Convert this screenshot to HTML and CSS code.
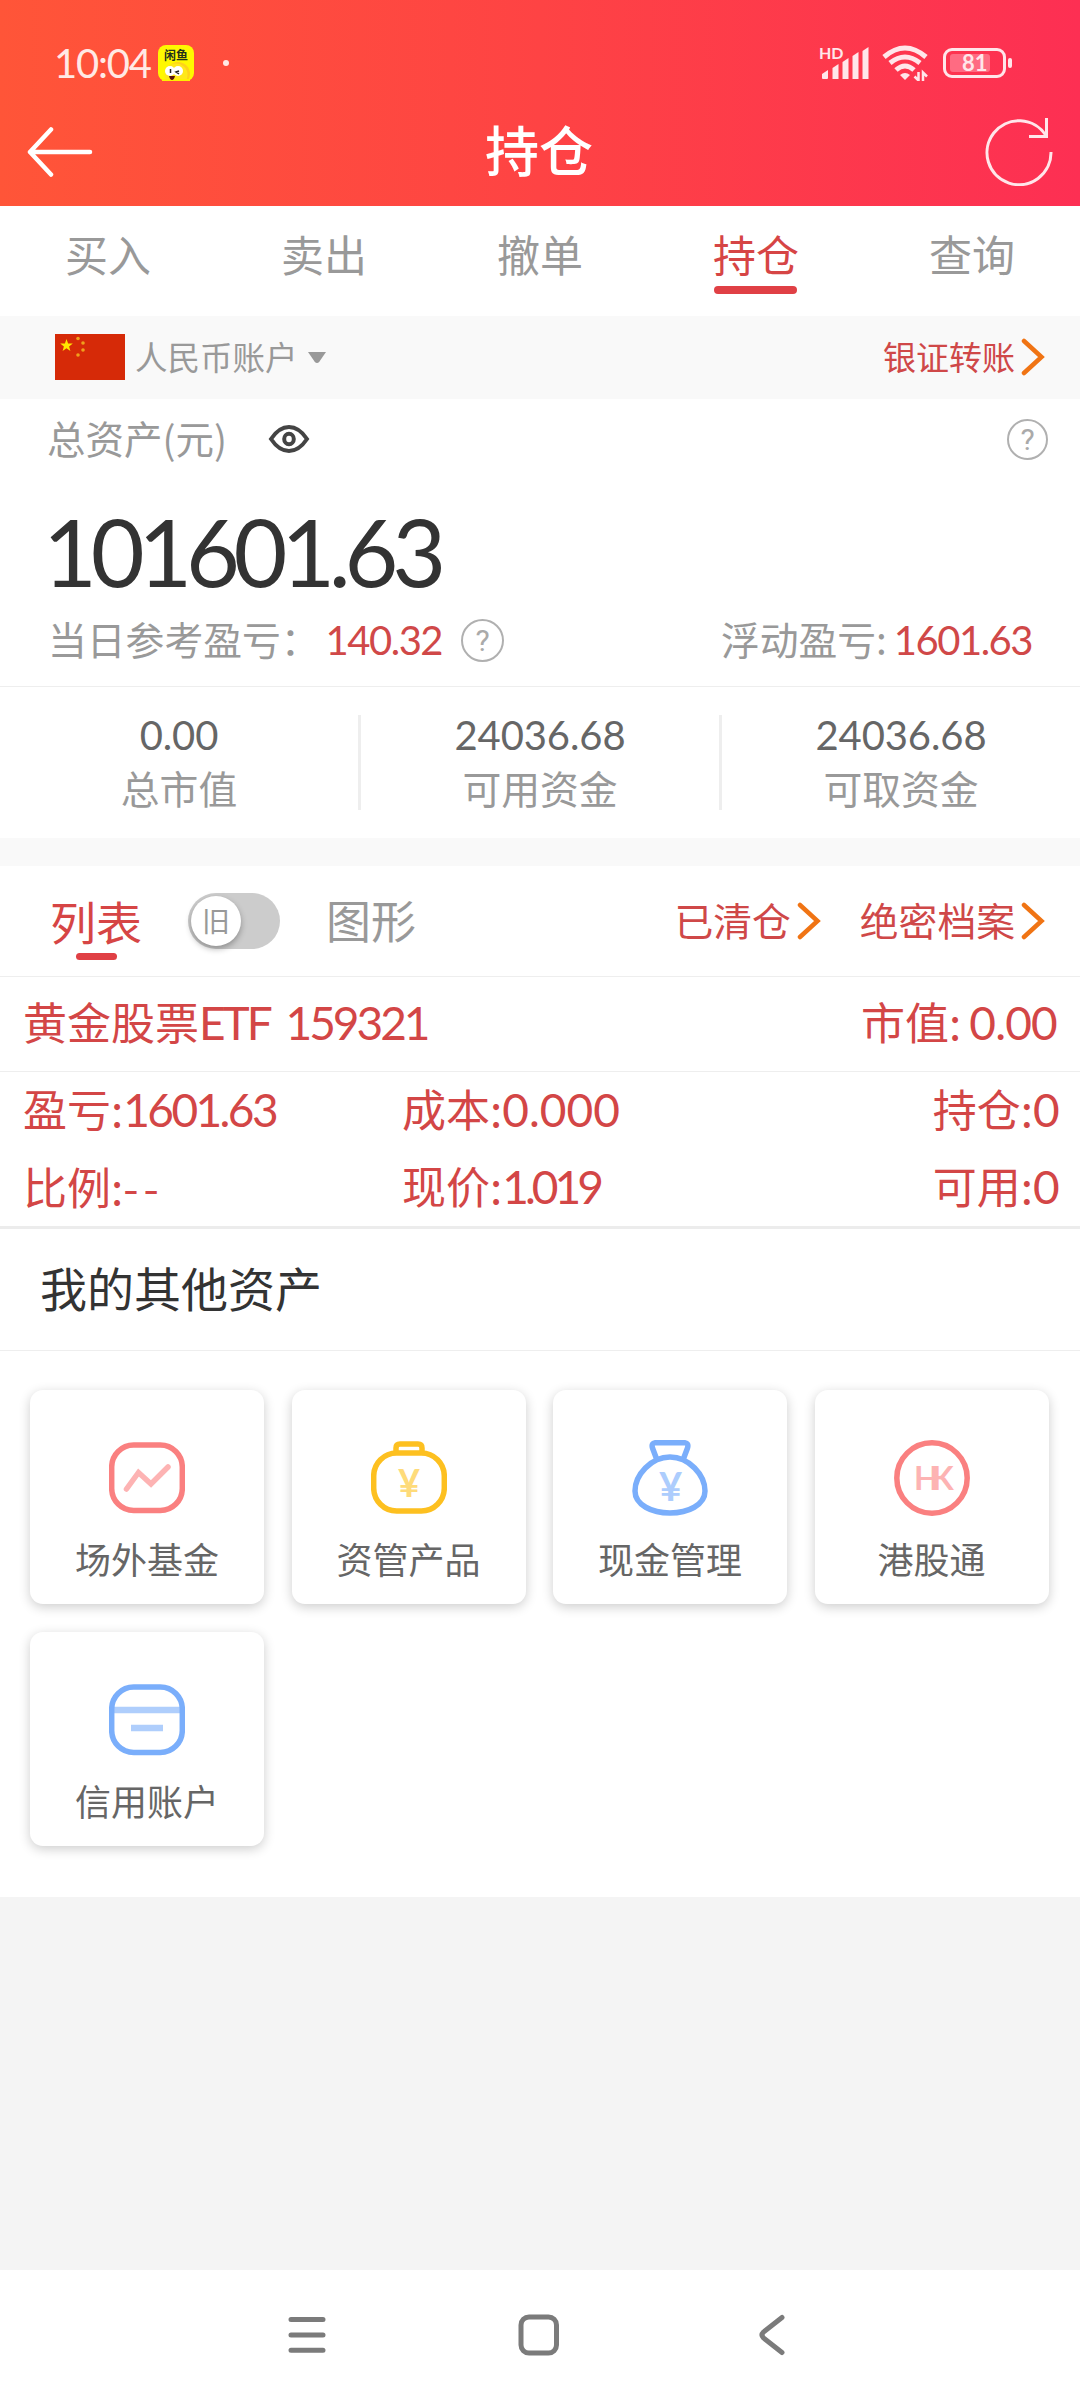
FILE: index.html
```html
<!DOCTYPE html>
<html lang="zh-CN">
<head>
    <meta charset="UTF-8">
    <meta name="viewport" content="width=device-width, initial-scale=1.0">
    <title>持仓</title>
    <link rel="stylesheet" href="styles.css">
</head>
<body>

    <!-- Header -->
    <header class="header">
        <div class="status">
            <span class="time">10:04</span>
            <svg class="app-icon" width="36" height="36" viewBox="0 0 36 36">
                <rect width="36" height="36" rx="8" fill="#fff800"/>
                <circle cx="20" cy="29" r="12" fill="#ffd21a"/>
                <circle cx="18" cy="30" r="11.500" fill="#ffe81a"/>
                <rect x="4" y="34" width="28" height="2" fill="#fff000"/>
                <text x="6" y="15" font-size="12" font-weight="bold" fill="#23301c">闲鱼</text>
                <circle cx="12" cy="26" r="5" fill="#fff"/>
                <circle cx="20" cy="26" r="5" fill="#fff"/>
                <path d="M12.500 24v4M21 26l-3 1 3 2" stroke="#222" stroke-width="1.500" fill="none"/>
                <path d="M11 31h6q-1 4-3 4t-3-4z" fill="#5a1408"/>
            </svg>
            <span class="dot"></span>
            <svg class="signal" width="50" height="40" viewBox="0 -2 50 40">
                <text x="0" y="14" font-size="16" font-weight="bold" fill="#ffe6ea">HD</text>
                <path d="M3 29l6-4v8a1 1 0 0 1-1 1H4a1 1 0 0 1-1-1zM13.500 23l6-4v15h-6zM23.500 17l6-4v21h-6zM33.500 11l6-4v27h-6zM43.500 6l6-4v32h-6z" fill="#ffe6ea"/>
            </svg>
            <svg class="wifi" width="46" height="36" viewBox="0 0 46 36">
                <g fill="none" stroke="#ffe6ea" stroke-width="5">
                    <path d="M2 12q21-18 42 0"/>
                    <path d="M8 18q15-12 30 0"/>
                    <path d="M14 25q9-8 18 0"/>
                </g>
                <path d="M18 30q5-4 10 0l-5 5z" fill="#ffe6ea"/>
                <path d="M36.500 27v8.500l-4-4M41 36v-8.500l4 4" fill="none" stroke="#ffe6ea" stroke-width="2.500"/>
            </svg>
            <div class="battery"><span>81</span></div>
        </div>
        <div class="nav">
            <svg width="66" height="52" viewBox="0 0 66 52">
                <path d="M24 3.500L3 26l21 22.500M3 26h60" fill="none" stroke="#fff" stroke-width="4.500" stroke-linecap="round" stroke-linejoin="round"/>
            </svg>
            <h1>持仓</h1>
            <svg class="refresh" width="68" height="70" viewBox="0 0 68 70">
                <path d="M66 36A32 32 0 1 1 61 19.500M61.500 2v18.500H44" fill="none" stroke="#ffe6ea" stroke-width="3"/>
            </svg>
        </div>
    </header>

    <!-- Tabs -->
    <div class="tabs">
        <span>买入</span>
        <span>卖出</span>
        <span>撤单</span>
        <span class="active">持仓</span>
        <span>查询</span>
    </div>

    <!-- Account -->
    <div class="account">
        <svg class="flag" width="70" height="46" viewBox="0 0 70 46">
            <rect width="70" height="46" fill="#d62a08"/>
            <path d="M11.500 5l1.600 4.400 4.700.1-3.700 2.900 1.300 4.500-3.900-2.700-3.900 2.700 1.300-4.500-3.700-2.900 4.700-.1z" fill="#ffe600"/>
            <g fill="#f0a01c">
                <circle cx="23" cy="4.500" r="1.800"/>
                <circle cx="28" cy="9" r="1.800"/>
                <circle cx="28" cy="16" r="1.800"/>
                <circle cx="23" cy="21" r="1.800"/>
            </g>
        </svg>
        <span class="account-name">人民币账户</span>
        <svg class="caret" width="18" height="12" viewBox="0 0 18 12"><path d="M0 0h18l-6.500 9.500q-2.500 3-5 0z" fill="#999"/></svg>
        <span class="link transfer">银证转账</span>
        <svg class="arrow" width="24" height="38" viewBox="0 0 24 38"><path d="M3 3l17.500 16L3 35"/></svg>
    </div>

    <!-- Total assets -->
    <div class="summary">
        <div class="summary-top">
            <span>总资产(元)</span>
            <svg class="eye" width="42" height="30" viewBox="0 0 42 30">
                <path d="M3 15Q11 3 21 3t18 12Q31 27 21 27T3 15z"/>
                <ellipse cx="21" cy="15" rx="4.800" ry="5.300"/>
            </svg>
            <span class="help">?</span>
        </div>
        <div class="total">101601.63</div>
        <div class="profit">
            <span>当日参考盈亏：</span>
            <b class="num today">140.32</b>
            <span class="help big">?</span>
            <span class="float">浮动盈亏:</span>
            <b class="num">1601.63</b>
        </div>
    </div>

    <div class="funds">
        <div><b class="num">0.00</b><span>总市值</span></div>
        <div><b class="num">24036.68</b><span>可用资金</span></div>
        <div><b class="num">24036.68</b><span>可取资金</span></div>
    </div>

    <!-- Position list -->
    <div class="list-head">
        <span class="view active">列表</span>
        <div class="toggle"><span>旧</span></div>
        <span class="view">图形</span>
        <span class="link cleared">已清仓</span>
        <svg class="arrow" width="24" height="38" viewBox="0 0 24 38"><path d="M3 3l17.500 16L3 35"/></svg>
        <span class="link secret">绝密档案</span>
        <svg class="arrow" width="24" height="38" viewBox="0 0 24 38"><path d="M3 3l17.500 16L3 35"/></svg>
    </div>
    <div class="stock">
        <span>黄金股票<b class="code">ETF 159321</b></span>
        <span>市值:<b class="value">0.00</b></span>
    </div>
    <div class="detail">
        <span>盈亏:<b>1601.63</b></span>
        <span>成本:<b class="cost">0.000</b></span>
        <span>持仓:<b>0</b></span>
        <span>比例:<i>--</i></span>
        <span>现价:<b class="price">1.019</b></span>
        <span>可用:<b>0</b></span>
    </div>

    <!-- Other assets -->
    <h2>我的其他资产</h2>
    <div class="cards">
        <div class="card">
            <svg width="76" height="76" viewBox="0 0 76 76" fill="none">
                <rect x="2.700" y="5" width="70.600" height="65.500" rx="22" stroke="#fa8080" stroke-width="5.500"/>
                <path d="M17.500 49l12-16.500L42 44l17-17" stroke="#fdb3b3" stroke-width="5.500" stroke-linecap="round"/>
            </svg>
            <span>场外基金</span>
        </div>
        <div class="card">
            <svg width="76" height="76" viewBox="0 0 76 76" fill="none" stroke="#fdc020" stroke-width="5.500">
                <rect x="2.700" y="13" width="70.600" height="58" rx="23"/>
                <path d="M25 13V8q0-4 4-4h18q4 0 4 4v5"/>
                <text class="yen" x="38" y="57" font-size="38" fill="#fedb7a">¥</text>
            </svg>
            <span>资管产品</span>
        </div>
        <div class="card">
            <svg width="76" height="76" viewBox="0 0 76 76" fill="none" stroke="#7aaefb" stroke-width="5.500">
                <path d="M38 17C19 17 3 35 3 51c0 14 17 22 35 22s35-8 35-22c0-16-16-34-35-34z"/>
                <path d="M25 20L20.500 8q-1.500-5 3-5.300h29q4.500.3 3 5.300L51 20"/>
                <text class="yen" x="38.500" y="61" font-size="40" fill="#adcdfd">¥</text>
            </svg>
            <span>现金管理</span>
        </div>
        <div class="card">
            <svg width="76" height="76" viewBox="0 0 76 76" fill="none">
                <circle cx="38" cy="38" r="35.200" stroke="#fa8080" stroke-width="5.500"/>
                <text class="hk" x="20" y="49.500">HK</text>
            </svg>
            <span>港股通</span>
        </div>
        <div class="card">
            <svg width="76" height="76" viewBox="0 0 76 76" fill="none">
                <path d="M4 28h68M22 46h32" stroke="#afcefc" stroke-width="6.500"/>
                <rect x="2.700" y="5" width="70.600" height="65.500" rx="22" stroke="#7aaefb" stroke-width="5.500"/>
            </svg>
            <span>信用账户</span>
        </div>
    </div>

    <!-- System navigation -->
    <footer class="system">
        <svg width="40" height="44" viewBox="0 0 40 44"><path d="M4 6.500h32M4 22h32M4 37.300h32"/></svg>
        <svg width="44" height="44" viewBox="0 0 44 44"><rect x="4" y="4" width="35.500" height="36" rx="8"/></svg>
        <svg class="back" width="28" height="44" viewBox="0 0 28 44"><path d="M24 4.500L5.500 19q-3 3 0 6L24 39.500"/></svg>
    </footer>

</body>
</html>
```
FILE: styles.css
```css
* {
    box-sizing: border-box;
}
body {
    display: flex;
    flex-direction: column;
    margin: 0;
    width: 1080px;
    height: 2400px;
    background: #f4f4f4;
    color: #999;
    font-family: "Noto Sans CJK SC", sans-serif;
    font-size: 38.800px;
    line-height: 1;
}
svg {
    display: block;
    flex: none;
}
span {
    white-space: nowrap;
}
h1, h2 {
    margin: 0;
}
b, .total, .time {
    font-family: Lato, sans-serif;
    font-weight: normal;
}

/* Header */
.header {
    height: 206px;
    background: linear-gradient(90deg, #ff5538, #fe4344 50%, #fd2f53);
    color: #fff;
}
.status {
    display: flex;
    align-items: center;
    height: 98px;
    padding: 28px 74px 0 54px;
}
.time {
    width: 104px;
    font-size: 40px;
    letter-spacing: -1.200px;
    color: #ffe9e5;
}
.dot {
    width: 6px;
    height: 6px;
    margin-left: 29px;
    border-radius: 50%;
    background: #ffe9e5;
}
.signal {
    margin-left: auto;
    font-family: Lato, sans-serif;
}
.wifi {
    margin-left: 13px;
}
.battery {
    position: relative;
    width: 63px;
    height: 30px;
    margin-left: 15px;
    padding: 3px 0 0 4px;
    border: 3px solid #ffe6ea;
    border-radius: 9px;
}
.battery span {
    display: block;
    width: 40px;
    height: 18px;
    padding-left: 12px;
    border-radius: 3px;
    background: #ff6b82;
    color: #ffe6ea;
    font: bold 22px/18px Lato, sans-serif;
}
.battery::after {
    content: "";
    position: absolute;
    right: -9px;
    top: 7px;
    width: 4px;
    height: 10px;
    border-radius: 2px;
    background: #ffe6ea;
}
.nav {
    display: flex;
    align-items: center;
    justify-content: space-between;
    height: 108px;
    padding: 0 27px;
}
.nav h1 {
    padding-bottom: 7px;
    font-size: 54px;
    font-weight: 500;
}
.refresh {
    margin-bottom: 3px;
}

/* Tabs */
.tabs {
    display: grid;
    grid-template-columns: repeat(5, 1fr);
    justify-items: center;
    height: 110px;
    background: #fff;
    font-size: 43px;
}
.tabs span {
    height: 88px;
    padding-top: 26px;
}
.tabs .active {
    position: relative;
    color: #d64545;
}
.tabs .active::after {
    content: "";
    position: absolute;
    left: 1px;
    bottom: 0;
    width: 83px;
    height: 8px;
    border-radius: 4px;
    background: #e04045;
}

/* Account */
.account {
    display: flex;
    align-items: center;
    height: 83px;
    padding: 0 35px 0 55px;
    background: #f9f9f9;
    font-size: 32.500px;
}
.account span, .summary-top span:first-child, .profit > span, .list-head > span, .stock > span, .detail > span {
    padding-bottom: 3px;
}
.flag {
    margin-bottom: 2px;
}
.account-name {
    margin-left: 10px;
}
.caret {
    margin-left: 10px;
}
.link {
    color: #cf4848;
}
.transfer {
    margin-left: auto;
    font-size: 33px;
}
.arrow {
    margin-left: 6px;
    fill: none;
    stroke: #f07414;
    stroke-width: 4.500;
    stroke-linecap: round;
}
.account .arrow {
    margin-bottom: 2px;
}

/* Total assets */
.summary {
    height: 288px;
    border-bottom: 1px solid #eee;
    background: #fff;
}
.summary-top {
    display: flex;
    align-items: center;
    height: 80px;
    padding: 0 32px 0 47px;
    font-size: 38.500px;
}
.eye {
    margin-left: 41px;
    fill: none;
    stroke: #444;
    stroke-width: 4;
}
.help {
    width: 41px;
    height: 41px;
    margin-left: auto;
    border: 2px solid #b0b0b0;
    border-radius: 50%;
    color: #aaa;
    font: 30px/37px Roboto, sans-serif;
    text-align: center;
}
.help.big {
    width: 43px;
    height: 43px;
    margin-left: 19px;
    line-height: 39px;
}
.total {
    height: 128px;
    padding-left: 43px;
    color: #333;
    font-size: 93px;
    line-height: 145px;
    letter-spacing: -6.300px;
}
.profit {
    display: flex;
    align-items: center;
    height: 66px;
    padding: 0 48px;
}
.num {
    font-size: 40px;
    letter-spacing: -1.500px;
}
.profit .num {
    color: #d04848;
}
.profit .today {
    margin-left: 6px;
}
.float {
    margin-left: auto;
    margin-right: 7px;
}

/* Funds */
.funds {
    display: grid;
    grid-template-columns: 361px 361px 358px;
    height: 179px;
    padding: 28px 0;
    border-bottom: 28px solid #f9f9f9;
    background: #fff;
}
.funds div {
    display: flex;
    flex-direction: column;
    align-items: center;
    height: 95px;
    border-right: 3px solid #eee;
}
.funds div:last-child {
    border: none;
}
.funds .num {
    height: 53px;
    color: #666;
    letter-spacing: -0.100px;
}

/* Position list */
.list-head {
    display: flex;
    align-items: center;
    height: 111px;
    padding: 0 35px 0 50px;
    border-bottom: 1px solid #eee;
    background: #fff;
}
.view {
    font-size: 45px;
}
.view.active {
    position: relative;
    color: #d64545;
    font-size: 46px;
}
.view.active::after {
    content: "";
    position: absolute;
    left: 26px;
    bottom: -14px;
    width: 41px;
    height: 7px;
    border-radius: 4px;
    background: #e04045;
}
.toggle {
    width: 92px;
    height: 56px;
    margin: 0 46px;
    padding: 3px;
    border-radius: 28px;
    background: #ccc;
}
.toggle span {
    display: block;
    width: 50px;
    height: 50px;
    border-radius: 50%;
    background: #fff;
    box-shadow: 0 3px 6px rgba(0, 0, 0, 0.3);
    font-size: 28px;
    line-height: 49px;
    text-align: center;
}
.cleared {
    margin-left: auto;
}
.secret {
    margin-left: 39px;
}
.stock {
    display: flex;
    align-items: center;
    justify-content: space-between;
    height: 95px;
    padding: 0 23px;
    border-bottom: 1px solid #eee;
    background: #fff;
    color: #d34646;
    font-size: 44px;
}
.stock b, .detail b {
    font-size: 46px;
    letter-spacing: -2.600px;
}
.stock .code {
    letter-spacing: -3px;
    word-spacing: 8px;
}
.stock .value {
    margin-left: 8px;
    letter-spacing: -0.800px;
}
.detail .cost {
    letter-spacing: 0;
}
.detail .price {
    letter-spacing: -4px;
}
.detail {
    display: grid;
    grid-template-columns: 379px 1fr auto;
    grid-template-rows: 77px 77px;
    align-items: center;
    height: 157px;
    padding: 0 23px;
    border-bottom: 3px solid #ececec;
    background: #fff;
    color: #d34646;
    font-size: 44px;
}
.detail i {
    font-style: normal;
    letter-spacing: 5px;
}

/* Other assets */
h2 {
    height: 122px;
    padding-left: 40px;
    border-bottom: 1px solid #eee;
    background: #fff;
    color: #333;
    font-size: 47px;
    font-weight: normal;
    line-height: 115px;
}
.cards {
    display: grid;
    grid-template-columns: repeat(4, 234px);
    grid-auto-rows: 214px;
    gap: 28px 27.500px;
    height: 546px;
    padding: 39px 0 0 30px;
    background: #fff;
}
.card {
    display: flex;
    flex-direction: column;
    align-items: center;
    gap: 24px;
    padding-top: 50px;
    border-radius: 13px;
    background: #fff;
    box-shadow: 0 3px 12px rgba(0, 0, 0, 0.2);
    color: #666;
    font-size: 36px;
}
.yen {
    font-family: Lato, sans-serif;
    font-weight: bold;
    text-anchor: middle;
    stroke: none;
}
.hk {
    fill: #fdb3b3;
    font-family: Lato, sans-serif;
    font-size: 32px;
    font-weight: bold;
    letter-spacing: -7px;
}

/* System navigation */
.system {
    display: flex;
    align-items: center;
    gap: 190px;
    height: 130px;
    margin-top: auto;
    padding-left: 287px;
    background: #fff;
}
.system svg {
    fill: none;
    stroke: #7b7b7b;
    stroke-width: 5;
    stroke-linecap: round;
}
.system .back {
    margin-left: 7px;
}
```
